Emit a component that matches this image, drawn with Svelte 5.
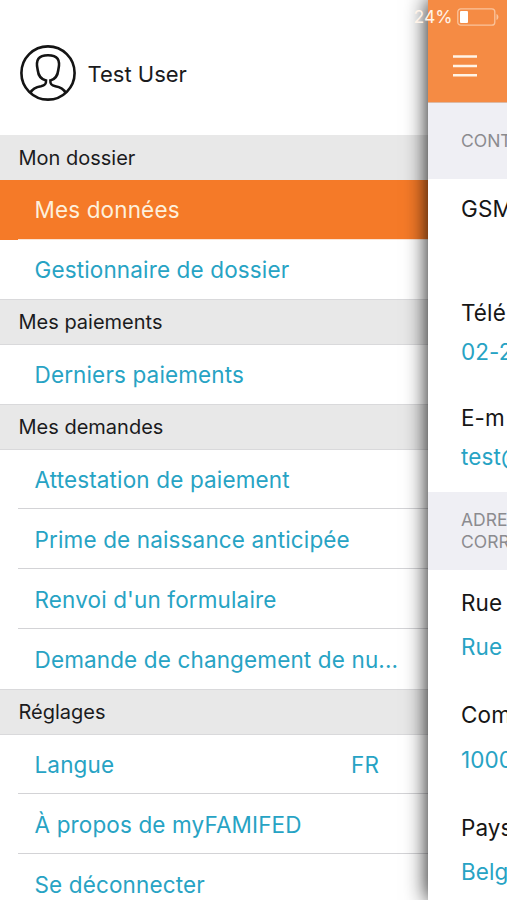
<script lang="ts">
  type Item = { label: string; value?: string; active?: boolean };
  type Group = { title: string; items: Item[] };
  type Field = { label: string; value?: string };

  const groups: Group[] = [
    {
      title: "Mon dossier",
      items: [
        { label: "Mes données", active: true },
        { label: "Gestionnaire de dossier" },
      ],
    },
    { title: "Mes paiements", items: [{ label: "Derniers paiements" }] },
    {
      title: "Mes demandes",
      items: [
        { label: "Attestation de paiement" },
        { label: "Prime de naissance anticipée" },
        { label: "Renvoi d'un formulaire" },
        { label: "Demande de changement de nu..." },
      ],
    },
    {
      title: "Réglages",
      items: [
        { label: "Langue", value: "FR" },
        { label: "À propos de myFAMIFED" },
        { label: "Se déconnecter" },
      ],
    },
  ];

  const contact: Field[] = [
    { label: "GSM" },
    { label: "Télé", value: "02-2" },
    { label: "E-m", value: "test@" },
  ];

  const address: Field[] = [
    { label: "Rue", value: "Rue" },
    { label: "Com", value: "1000" },
    { label: "Pays", value: "Belg" },
  ];
</script>

<div class="screen">
  <nav class="menu">
    <header class="profile">
      <svg class="avatar" viewBox="0 0 56 56">
        <circle cx="28" cy="28" r="26.6" />
        <path
          d="M10.5 47.6C12.5 43.5 16 42 21 41.2C25.3 40.4 26.3 39 26 35.4C20.5 34.2 18.3 30.5 17.7 25C15.3 15 18.5 10.2 28 10.2C37.5 10.2 40.7 15 38.3 25C37.7 30.5 35.5 34.2 30.4 35.4C30.1 39 31 40.4 35.3 41.2C40 42 43.5 43.5 45.5 47.6"
        />
      </svg>
      <span class="name">Test User</span>
    </header>

    {#each groups as group}
      <h2>{group.title}</h2>
      <ul>
        {#each group.items as item}
          <li class:active={item.active}>
            <span>{item.label}</span>
            {#if item.value}<span class="value">{item.value}</span>{/if}
          </li>
        {/each}
      </ul>
    {/each}
  </nav>

  <main class="page">
    <header class="bar">
      <svg class="burger" viewBox="0 0 25 24">
        <path d="M0.5 2.5H24.5M0.5 12H24.5M0.5 21.3H24.5" />
      </svg>
    </header>
    <h3>CONT</h3>
    <dl class="contact">
      {#each contact as field}
        <div class="field">
          <dt>{field.label}</dt>
          {#if field.value}<dd>{field.value}</dd>{/if}
        </div>
      {/each}
    </dl>
    <h3 class="double">ADRE<br />CORR</h3>
    <dl class="address">
      {#each address as field}
        <div class="field">
          <dt>{field.label}</dt>
          <dd>{field.value}</dd>
        </div>
      {/each}
    </dl>
  </main>

  <div class="status">
    <span>24%</span>
    <svg viewBox="0 0 42 18">
      <rect class="shell" x="0.8" y="0.8" width="37" height="16.4" rx="3" />
      <rect class="charge" x="3" y="3" width="8" height="12" rx="1" />
      <path class="tip" d="M39.5 6C42 7 42 11 39.5 12Z" />
    </svg>
  </div>
</div>

<style>
  :global(body) {
    margin: 0;
    overflow: hidden;
  }

  .screen {
    position: relative;
    display: flex;
    width: 507px;
    height: 900px;
    overflow: hidden;
    background: #fff;
    color: #1b1b1d;
    font-family: Inter, "Liberation Sans", sans-serif;
    font-size: 22px;
  }

  .menu {
    flex: none;
    width: 428px;
  }

  .profile {
    display: flex;
    align-items: center;
    gap: 12px;
    box-sizing: border-box;
    height: 135px;
    padding: 11px 0 0 19.5px;
  }

  .name {
    padding-top: 1px;
  }

  .avatar {
    width: 56px;
    height: 56px;
    fill: none;
    stroke: #141414;
    stroke-width: 2.6;
  }

  h2 {
    box-sizing: border-box;
    height: 46.3px;
    margin: 0;
    padding-left: 18.5px;
    border: solid #d9d9db;
    border-width: 1px 0;
    background: #e8e8e8;
    font-size: 20px;
    font-weight: 400;
    line-height: 45px;
  }

  h2:first-of-type {
    height: 45px;
    border-color: #e8e8e8;
    line-height: 44px;
  }

  ul {
    margin: 0;
    padding: 0;
    list-style: none;
  }

  li {
    position: relative;
    display: flex;
    justify-content: space-between;
    height: 59.9px;
    padding: 0 49px 0 34.5px;
    color: #27a3c4;
    font-size: 22.5px;
    letter-spacing: 0.14px;
    line-height: 60px;
    white-space: nowrap;
  }

  li:last-child {
    height: 59px;
  }

  li:only-child {
    height: 58.4px;
  }

  li:not(:last-child)::after {
    content: "";
    position: absolute;
    right: 0;
    bottom: 1px;
    left: 18px;
    height: 1px;
    background: #d3d3d6;
  }

  li.active {
    background: #f57a28;
    color: #fdf0dc;
  }

  li.active::after {
    bottom: 0;
    background: #fbe3d3;
  }

  .page {
    flex: none;
    position: relative;
    width: 79px;
    height: 900px;
    background: #fff;
    box-shadow: 0 0 21px rgba(0, 0, 0, 0.95);
    white-space: nowrap;
  }

  .bar {
    box-sizing: border-box;
    height: 103px;
    padding: 54px 0 0 24px;
    border-bottom: 1px solid #dcb9a4;
    background: #f58b44;
  }

  .burger {
    display: block;
    width: 26px;
    height: 24px;
    fill: none;
    stroke: #fff3e6;
    stroke-width: 2.4;
  }

  h3 {
    height: 76px;
    margin: 0;
    padding-left: 33px;
    background: #efeff4;
    color: #8b8b8f;
    font-size: 17.5px;
    font-weight: 400;
    line-height: 76px;
  }

  h3.double {
    box-sizing: border-box;
    height: 78px;
    padding-top: 17px;
    line-height: 22px;
  }

  dl,
  dd {
    margin: 0;
  }

  .field {
    box-sizing: border-box;
    padding-left: 33px;
    font-size: 22.5px;
    letter-spacing: 0.1px;
  }

  dt {
    color: #161616;
  }

  dd {
    color: #27a3c4;
  }

  .contact {
    height: 313px;
  }

  .contact .field {
    height: 104.5px;
    padding-top: 9.5px;
    line-height: 39px;
  }

  .address .field {
    height: 112.3px;
    padding-top: 11px;
    line-height: 44.4px;
  }

  .status {
    position: absolute;
    top: 8px;
    left: 413.5px;
    display: flex;
    align-items: center;
    gap: 4px;
    color: #fff3e8;
    font-size: 17.6px;
    line-height: 18px;
  }

  .status svg {
    width: 42px;
    height: 18px;
  }

  .shell {
    fill: none;
    stroke: #fac49c;
    stroke-width: 1.3;
  }

  .charge {
    fill: #fff;
  }

  .tip {
    fill: #fac49c;
  }
</style>
